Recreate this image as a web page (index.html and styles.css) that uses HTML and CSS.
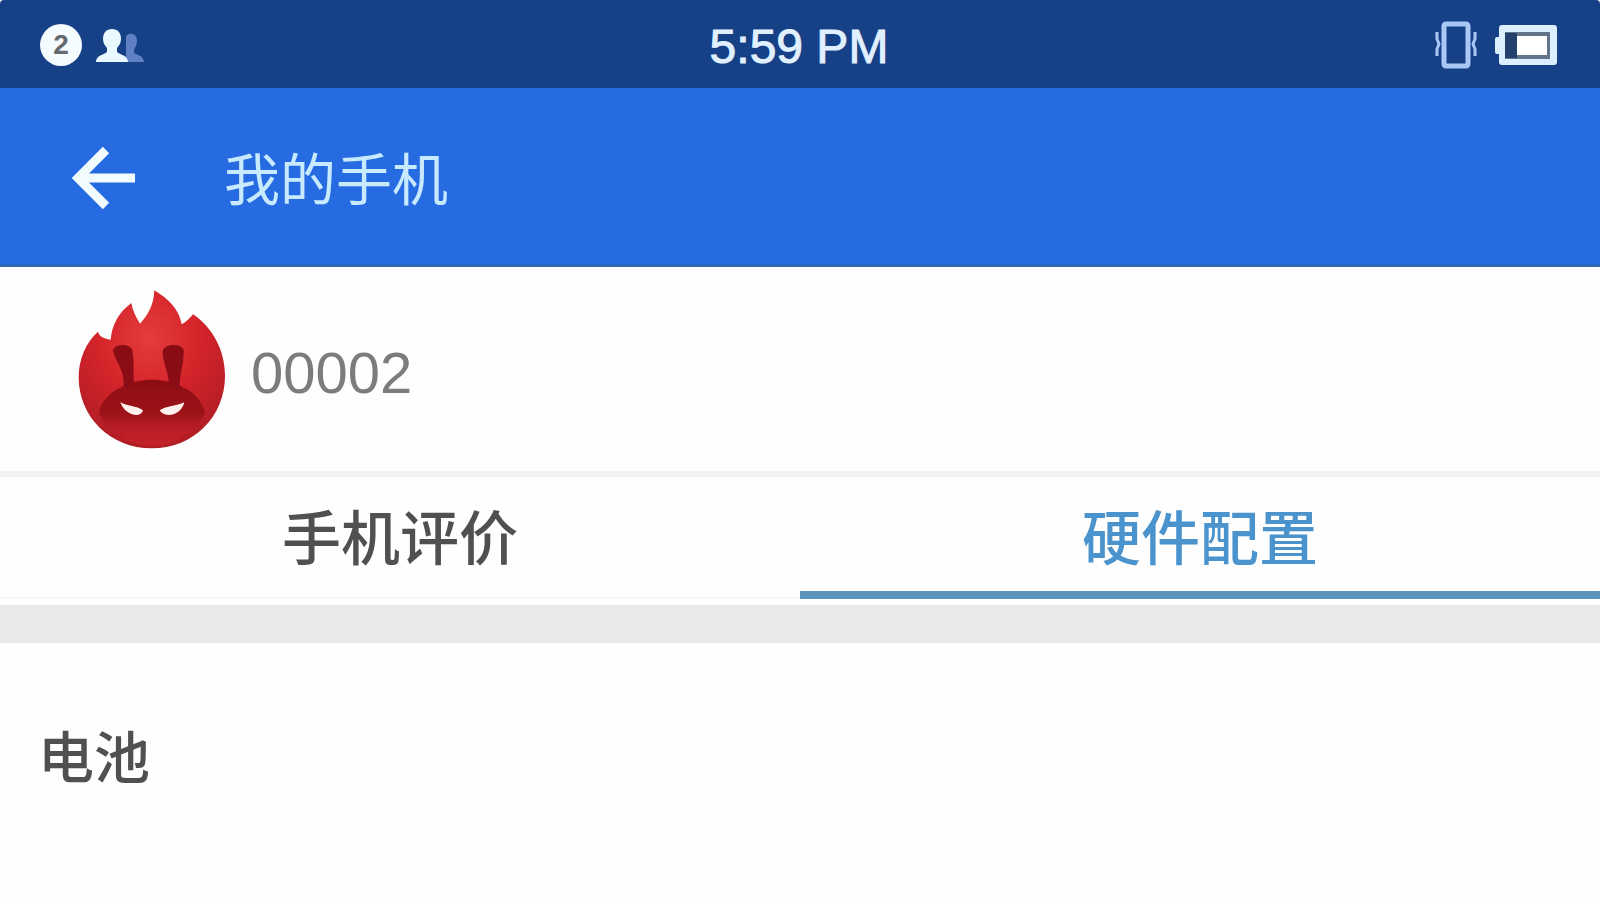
FILE: index.html
```html
<!DOCTYPE html>
<html lang="zh-CN">
<head>
    <meta charset="UTF-8">
    <meta name="viewport" content="width=device-width, initial-scale=1.0">
    <title>我的手机</title>
    <link rel="stylesheet" href="styles.css">
</head>
<body>
<div class="status-bar">
    <div class="status-left">
        <span class="status-count">2</span>
        <svg class="icon-users" width="48" height="36" viewBox="0 0 48 36">
            <path fill="#5f80c4" d="M33 7c5-1 8 2 8 7 0 4-2 6-3 9v3c3 2 9 2 10 9H30V9z"/>
            <path fill="#eaf8ff" d="M16 2c6 0 9 4 9 10 0 4-2 7-4 9v4c3 3 11 3 11 10H0c0-7 8-7 11-10v-4c-2-2-4-5-4-9 0-6 3-10 9-10z"/>
        </svg>
    </div>
    <div class="status-time">5:59 PM</div>
    <div class="status-right">
        <svg width="44" height="48" viewBox="0 0 44 48" fill="none" stroke="#a9c8f5">
            <rect x="10" y="3" width="24" height="42" rx="2" stroke-width="5"/>
            <path stroke-width="3" d="M3 11v7l2 5-2 5v7M41 11v7l-2 5 2 5v7"/>
        </svg>
        <svg width="64" height="42" viewBox="0 0 64 42">
            <path fill="#dcefff" d="M8 1h52q3 0 3 3v34q0 3-3 3H8q-3 0-3-3v-8H3q-2 0-2-2V15q0-2 2-2h2V4q0-3 3-3z"/>
            <path fill="#63758a" d="M11 8h45v27H11z"/>
            <path fill="#24406c" d="M11 9h12v25H11z"/>
            <path fill="#fff" d="M23 12h30v19H23z"/>
        </svg>
    </div>
</div>
<header class="header">
    <button class="back" type="button" aria-label="返回">
        <svg width="64" height="64" viewBox="0 0 64 64" fill="none" stroke="#f2fcff" stroke-width="9">
            <path d="M34 4L6 32l28 28M6 32h57"/>
        </svg>
    </button>
    <h1 class="title">我的手机</h1>
</header>
<div class="profile">
    <svg class="logo" width="150" height="160" viewBox="52 26 450 480">
        <defs>
            <radialGradient id="flame" cx="0.48" cy="0.3" r="0.7">
                <stop offset="0" stop-color="#e53c3c"/>
                <stop offset="0.5" stop-color="#d4242a"/>
                <stop offset="1" stop-color="#b01d24"/>
            </radialGradient>
            <linearGradient id="face" x1="0" y1="0" x2="0" y2="1">
                <stop offset="0" stop-color="#8c0d13"/>
                <stop offset="0.5" stop-color="#9c1218"/>
                <stop offset="0.75" stop-color="#bb1e26"/>
                <stop offset="1" stop-color="#c4202a"/>
            </linearGradient>
        </defs>
        <path fill="url(#flame)" d="M284 30c40 24 74 56 82 102 12-6 24-18 34-30 60 40 96 110 96 184 0 124-96 218-220 218S57 410 57 290c0-54 22-104 58-136 4 14 14 20 38 24 4-44 24-82 62-110 4 22 12 40 26 62 24-26 42-58 43-100z"/>
        <path fill="url(#face)" d="M190 318c46-26 128-26 174 0 40 18 66 46 72 82-36 60-94 96-160 96s-124-36-158-94c4-38 32-66 72-84z"/>
        <path fill="#8a0c14" d="M160 210c4-20 52-22 58 0 6 36 2 70 6 110h-32c4-52-26-76-32-110zM372 210c-4-20-54-22-62 0-6 26 20 70 18 110h32c0-40 14-76 12-110z"/>
        <path fill="#fff1ee" d="M182 366c20 12 48 10 68 24-2 8-8 14-18 14-24 0-42-16-50-38zM374 366c-24 12-52 10-74 24 4 8 14 14 26 14 26 0 42-16 48-38z"/>
    </svg>
    <span class="profile-name">00002</span>
</div>
<nav class="tabs">
    <button class="tab" type="button">手机评价</button>
    <button class="tab tab-active" type="button">硬件配置</button>
</nav>
<main class="content">
    <h2 class="content-title">电池</h2>
</main>
</body>
</html>
```
FILE: styles.css
```css
*{
    box-sizing: border-box;
}
body{
    margin: 0;
    background: #fefefe;
    color: #505050;
    font-family: "Liberation Sans", "Noto Sans CJK SC", sans-serif;
}
button{
    border: 0;
    padding: 0;
    background: none;
    font-family: inherit;
    cursor: pointer;
}
svg{
    display: block;
}
.status-bar{
    display: grid;
    grid-template-columns: 1fr auto 1fr;
    align-items: center;
    height: 88px;
    padding: 2px 42px 0 40px;
    border-radius: 4px 4px 0 0;
    background: #164187;
    color: #e0f0ff;
}
.status-left,
.status-right{
    display: flex;
    align-items: center;
}
.status-left{
    gap: 14px;
}
.status-right{
    justify-content: flex-end;
    gap: 16px;
}
.status-count{
    width: 42px;
    height: 42px;
    border-radius: 50%;
    background: #f4fcff;
    color: #66696c;
    font-size: 28px;
    font-weight: bold;
    line-height: 42px;
    text-align: center;
}
.status-time{
    padding-top: 4px;
    font-size: 48px;
    line-height: 56px;
    -webkit-text-stroke: 1px #e0f0ff;
}
.header{
    display: flex;
    align-items: center;
    gap: 88px;
    height: 179px;
    padding: 4px 72px 0;
    border-bottom: 3px solid #3068b8;
    background: #266be1;
}
.title{
    margin: 0;
    padding-top: 6px;
    color: #c8eaff;
    font-size: 56px;
    font-weight: normal;
    line-height: 80px;
}
.profile{
    display: flex;
    align-items: center;
    gap: 24px;
    height: 210px;
    padding: 0 77px;
    border-bottom: 6px solid #f2f2f2;
}
.profile-name{
    padding-top: 8px;
    color: #7c7c7c;
    font-size: 58px;
    line-height: 64px;
}
.tabs{
    display: flex;
    height: 128px;
    padding-bottom: 6px;
}
.tab{
    flex: 1;
    padding-bottom: 6px;
    border-bottom: 2px solid #f8f8f8;
    color: #505050;
    font-size: 59px;
    font-weight: 500;
}
.tab-active{
    padding-bottom: 0;
    border-bottom: 8px solid #5b93b8;
    color: #4a93cc;
}
.content{
    padding: 76px 38px;
    border-top: 38px solid #eaeaea;
}
.content-title{
    margin: 0;
    font-size: 56px;
    font-weight: 500;
    line-height: 80px;
}
```
